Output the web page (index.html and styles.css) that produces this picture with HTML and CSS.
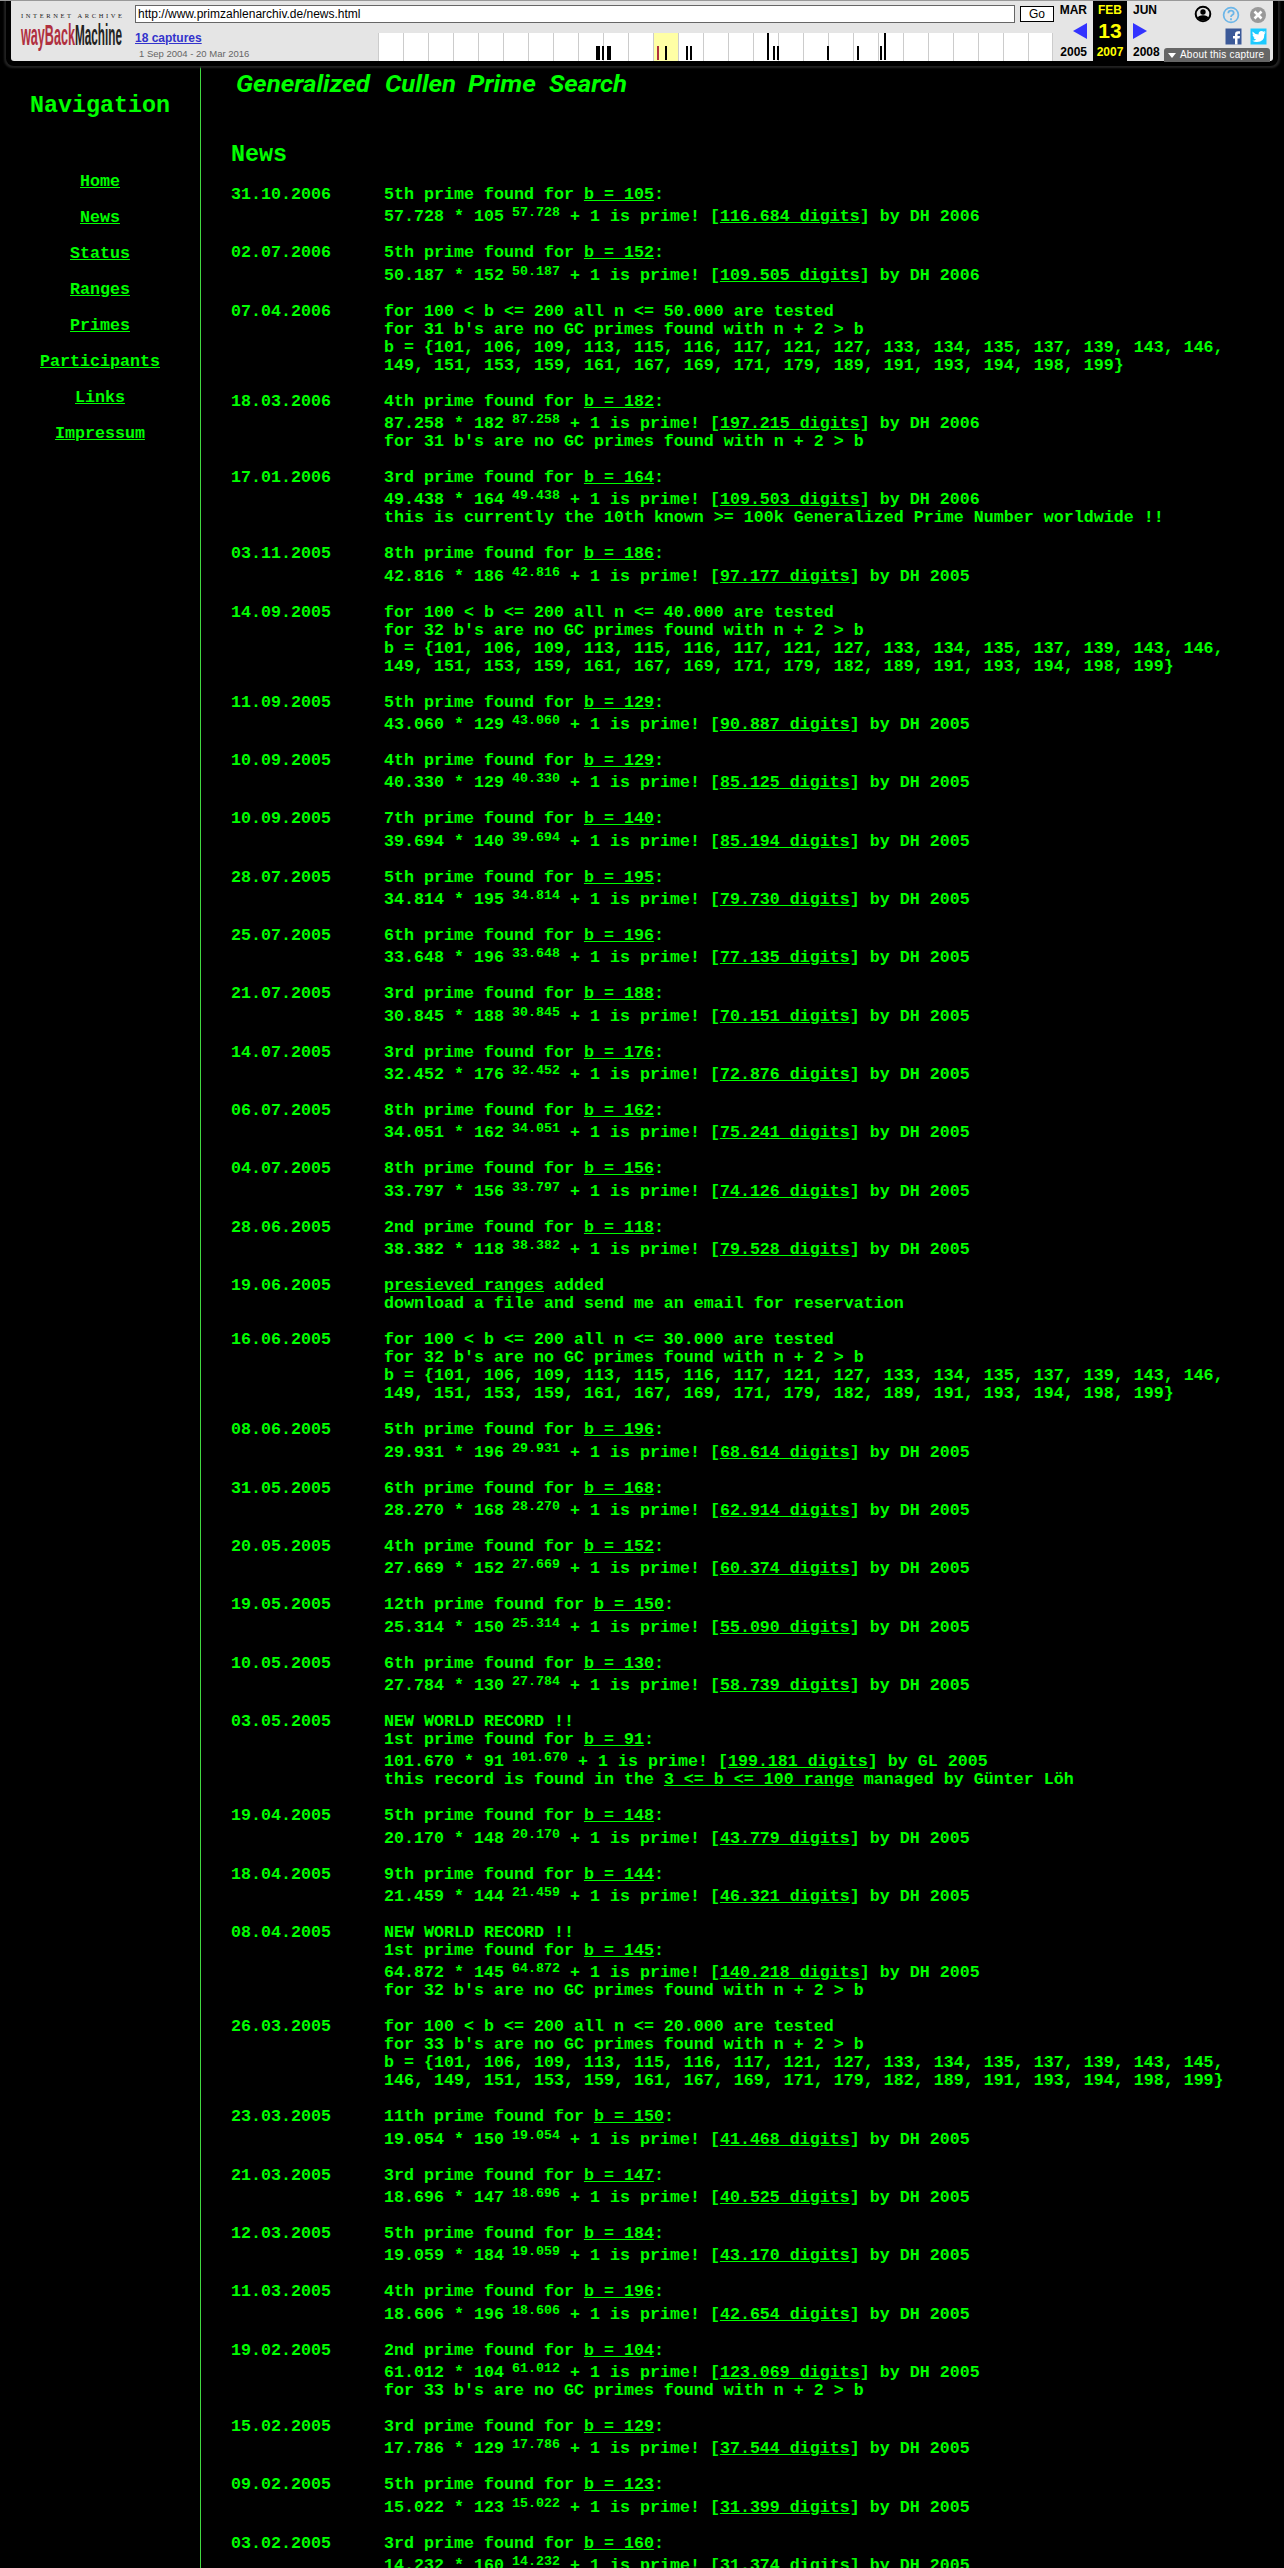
FILE: index.html
```html
<!DOCTYPE html>
<html lang="en">
<head>
    <meta charset="UTF-8">
    <title>Generalized Cullen Prime Search</title>
    <link rel="stylesheet" href="styles.css">
</head>
<body>
    <div class="toolbar">
        <svg class="wb-logo" width="102" height="40" viewBox="0 0 102 40">
            <text class="wb-small" x="0" y="9" textLength="101">INTERNET ARCHIVE</text>
            <g transform="translate(0 36) scale(1 3.2)">
                <text class="wb-big red" x="0" y="0" textLength="54" lengthAdjust="spacingAndGlyphs">wayBack</text>
                <text class="wb-big" x="54" y="0" textLength="47" lengthAdjust="spacingAndGlyphs">Machine</text>
            </g>
        </svg>

        <div class="middle">
            <form class="url-form">
                <input class="url" type="text" value="http://www.primzahlenarchiv.de/news.html">
                <button class="go" type="button">Go</button>
            </form>
            <div class="captures">
                <div class="capture-info">
                    <a href="#">18 captures</a>
                    <div class="range">1 Sep 2004 - 20 Mar 2016</div>
                </div>
                <svg class="sparkline" width="675" height="28" viewBox="0 0 675 28">
                    <rect width="675" height="28" fill="#fff"/>
                    <rect x="275" width="25" height="28" fill="#ffffa5"/>
                    <path d="M.5 0v28M25.5 0v28M50.5 0v28M75.5 0v28M100.5 0v28M125.5 0v28M150.5 0v28M175.5 0v28M200.5 0v28M225.5 0v28M250.5 0v28M275.5 0v28M300.5 0v28M325.5 0v28M350.5 0v28M375.5 0v28M400.5 0v28M425.5 0v28M450.5 0v28M475.5 0v28M500.5 0v28M525.5 0v28M550.5 0v28M575.5 0v28M600.5 0v28M625.5 0v28M650.5 0v28M674.5 0v28" stroke="#ccc"/>
                    <path d="M218 13h4v14h-4zM224 13h2v14h-2zM229 13h4v14h-4zM287 13h2v14h-2zM308 13h2v14h-2zM312 13h2v14h-2zM389 0h2v27h-2zM395 13h2v14h-2zM399 13h2v14h-2zM449 13h2v14h-2zM479 13h2v14h-2zM502 13h2v14h-2zM506 0h2v27h-2z"/>
                    <path d="M279 13h2v14h-2z" fill="#b0303f"/>
                </svg>
            </div>
        </div>

        <div class="month prev"><span>MAR</span><i class="arrow left"></i><span>2005</span></div>
        <div class="month current"><span>FEB</span><strong>13</strong><span>2007</span></div>
        <div class="month next"><span>JUN</span><i class="arrow right"></i><span>2008</span></div>

        <svg class="icons" width="73" height="40" viewBox="0 0 73 40">
            <circle cx="9" cy="9" r="7.3" fill="none" stroke="#000" stroke-width="2"/>
            <circle cx="9" cy="7" r="2.7"/>
            <path d="M3.5 13q1-2.800 5.500-2.800t5.500 2.800q-2 2.500-5.500 2.500t-5.500-2.500z"/>
            <circle cx="37" cy="10" r="7.400" fill="none" stroke="#6cb6e8" stroke-width="1.700"/>
            <path d="M34.300 8.200q.2-2.500 2.700-2.500t2.700 2.200q0 1.300-1.500 2.200-1.200.8-1.200 1.900M37 13.300v2" fill="none" stroke="#6cb6e8" stroke-width="1.800"/>
            <circle cx="64" cy="10" r="8" fill="#999"/>
            <path d="M60.500 6.500l7 7M67.500 6.500l-7 7" stroke="#fff" stroke-width="2.600"/>
            <path d="M31.500 23.500h16v16h-16z" fill="#3b5998"/>
            <path d="M41 39.500v-6h-2v-2.400h2v-1.800q0-3 3-3h2v2.400h-1.500q-1 0-1 1v1.400h2.500l-.4 2.400h-2.100v6z" fill="#fff"/>
            <path d="M56.500 23.500h16v16h-16z" fill="#1dcaff"/>
            <path d="M58.500 26.500q2.500 3 6 3 0-3.500 3-3.500 1.300 0 2 .8l2-.7-1.200 1.700 1.500-.4-1.400 1.500q0 8-7.500 8.200-2.500 0-4.600-1.300 2.400 0 3.900-1.200-2-.1-2.700-2.100h1.200q-2.200-.8-2.300-3l1.200.4q-1.700-1.300-1.100-3.400z" fill="#fff"/>
        </svg>
        <div class="about"><i></i>About this capture</div>
    </div>

    <div class="page">
        <div class="sidebar">
            <h2>Navigation</h2>
            <a href="#">Home</a>
            <a href="#">News</a>
            <a href="#">Status</a>
            <a href="#">Ranges</a>
            <a href="#">Primes</a>
            <a href="#">Participants</a>
            <a href="#">Links</a>
            <a href="#">Impressum</a>
        </div>

        <div class="content">
            <svg class="title" width="400" height="26" viewBox="0 0 400 26">
                <text x="5" y="19" textLength="134" lengthAdjust="spacingAndGlyphs">Generalized</text>
                <text x="154" y="19" textLength="71" lengthAdjust="spacingAndGlyphs">Cullen</text>
                <text x="237" y="19" textLength="68" lengthAdjust="spacingAndGlyphs">Prime</text>
                <text x="318" y="19" textLength="78" lengthAdjust="spacingAndGlyphs">Search</text>
            </svg>
            <h2>News</h2>
            <div id="news"></div>
        </div>
    </div>

    <script src="news.js"></script>
</body>
</html>
```

FILE: styles.css
```css
* {
    box-sizing: border-box;
}

html {
    height: 2568px;
    overflow: hidden;
    background: #000;
}

body {
    margin: 0;
    height: 2568px;
    overflow: hidden;
    background: #000;
    color: #00ff00;
    border-top: 1px solid #999;
    font-family: "Liberation Mono", monospace;
    font-size: 12.5pt;
    font-weight: bold;
    line-height: 18px;
}

a {
    color: inherit;
}

/* archive toolbar */
.toolbar {
    position: relative;
    display: flex;
    width: 1262px;
    height: 60px;
    margin: 0 auto;
    background: #e5e5e5;
    color: #000;
    border-radius: 0 0 3px 3px;
    box-shadow: 0 0 0 5px #000, 0 0 2px 7px #222;
    font-family: "Liberation Sans", Arial, sans-serif;
    font-size: 12px;
    font-weight: normal;
}

.wb-logo {
    margin: 8px 0 0 10px;
    overflow: visible;
}

.wb-small {
    font: 6.5px "Liberation Serif", serif;
    fill: #222;
}

.wb-big {
    font: bold 9px "Liberation Sans", sans-serif;
    fill: #222;
}

.wb-big.red {
    fill: #b0303f;
}

.middle {
    width: 919px;
    margin-left: 12px;
}

.url-form {
    display: flex;
    gap: 5px;
    margin-top: 4px;
}

.url {
    width: 880px;
    height: 18px;
    padding: 0 2px;
    border: 1px solid #666;
    background: #fff;
    font: 12px "Liberation Sans", sans-serif;
}

.go {
    width: 34px;
    height: 16px;
    margin-top: 1px;
    padding: 0;
    border: 1px solid #000;
    background: #fff;
    font: 12px "Liberation Sans", sans-serif;
}

.captures {
    display: flex;
    margin-top: 10px;
}

.capture-info {
    width: 243px;
    line-height: 14px;
}

.capture-info a {
    display: block;
    margin-top: -2px;
    color: #33c;
    font-weight: bold;
}

.range {
    margin: 3px 0 0 4px;
    color: #666;
    font-size: 9.5px;
    line-height: 12px;
}

.month {
    display: flex;
    flex-direction: column;
    justify-content: space-between;
    height: 60px;
    padding: 0 6px;
    font-weight: bold;
    line-height: 18px;
}

.prev {
    width: 39px;
    align-items: flex-end;
}

.current {
    width: 34px;
    align-items: center;
    padding: 0;
    background: #000;
    color: #ff0;
}

.current strong {
    font-size: 21px;
}

.next {
    width: 45px;
    align-items: flex-start;
}

.arrow {
    border: 8px solid transparent;
}

.left {
    border-left: 0;
    border-right: 14px solid #33f;
}

.right {
    border-right: 0;
    border-left: 14px solid #33f;
}

.icons {
    position: absolute;
    top: 4px;
    right: 6px;
}

.about {
    position: absolute;
    right: 3px;
    bottom: -1px;
    display: flex;
    align-items: center;
    width: 106px;
    height: 14px;
    padding-left: 4px;
    border-radius: 3px 3px 0 0;
    background: #666;
    color: #fff;
    font-size: 10px;
    letter-spacing: 0.2px;
    white-space: nowrap;
}

.about i {
    margin-right: 4px;
    border: 4px solid transparent;
    border-top: 5px solid #fff;
    border-bottom: 0;
}

/* page */
.page {
    display: flex;
    height: 2502px;
    margin-top: 5px;
}

h2 {
    margin: 0;
    font-size: 17.5pt;
    line-height: 26px;
}

.sidebar {
    display: flex;
    flex-direction: column;
    align-items: center;
    gap: 18px;
    width: 201px;
    padding-top: 27px;
    border-right: 1px solid #40d840;
}

.sidebar h2 {
    margin-bottom: 36px;
}

.content {
    padding-left: 30px;
}

.title {
    display: block;
    margin: 7px 0 43px;
    overflow: visible;
}

.title text {
    font: italic bold 23px Roboto, sans-serif;
    fill: #00ff00;
}

.entry {
    display: grid;
    grid-template-columns: 153px 1fr;
    padding-bottom: 18px;
    white-space: nowrap;
}

#news {
    margin-top: 18px;
}

.formula {
    padding-top: 4.35px;
}

sup {
    font-size: 10pt;
    line-height: 0;
    vertical-align: 5.5px;
}
```

FILE: news.js
```js
// [date, ...lines]; a line is plain html, or an array [k, b, digits, who] for a found prime
function found(nth, date, k, b, digits, year, finder) {
    return [date, nth + ' prime found for <a href="#">b = ' + b + '</a>:', [k, b, digits, (finder || 'DH') + ' ' + year]];
}

function tested(date, n, count, first, second) {
    return [
        date,
        'for 100 &lt; b &lt;= 200 all n &lt;= ' + n + ' are tested',
        left(count),
        'b = {101, 106, 109, 113, 115, 116, 117, 121, 127, 133, 134, 135, 137, 139, 143, ' + first,
        second + '}'
    ];
}

function left(count) {
    return 'for ' + count + " b's are no GC primes found with n + 2 &gt; b";
}

const record = 'NEW WORLD RECORD !!';
const list182 = '149, 151, 153, 159, 161, 167, 169, 171, 179, 182, 189, 191, 193, 194, 198, 199';

const news = [
    found('5th', '31.10.2006', '57.728', 105, '116.684', 2006),
    found('5th', '02.07.2006', '50.187', 152, '109.505', 2006),
    tested('07.04.2006', '50.000', 31, '146,', '149, 151, 153, 159, 161, 167, 169, 171, 179, 189, 191, 193, 194, 198, 199'),
    found('4th', '18.03.2006', '87.258', 182, '197.215', 2006).concat(left(31)),
    found('3rd', '17.01.2006', '49.438', 164, '109.503', 2006).concat('this is currently the 10th known &gt;= 100k Generalized Prime Number worldwide !!'),
    found('8th', '03.11.2005', '42.816', 186, '97.177', 2005),
    tested('14.09.2005', '40.000', 32, '146,', list182),
    found('5th', '11.09.2005', '43.060', 129, '90.887', 2005),
    found('4th', '10.09.2005', '40.330', 129, '85.125', 2005),
    found('7th', '10.09.2005', '39.694', 140, '85.194', 2005),
    found('5th', '28.07.2005', '34.814', 195, '79.730', 2005),
    found('6th', '25.07.2005', '33.648', 196, '77.135', 2005),
    found('3rd', '21.07.2005', '30.845', 188, '70.151', 2005),
    found('3rd', '14.07.2005', '32.452', 176, '72.876', 2005),
    found('8th', '06.07.2005', '34.051', 162, '75.241', 2005),
    found('8th', '04.07.2005', '33.797', 156, '74.126', 2005),
    found('2nd', '28.06.2005', '38.382', 118, '79.528', 2005),
    ['19.06.2005', '<a href="#">presieved ranges</a> added', 'download a file and send me an email for reservation'],
    tested('16.06.2005', '30.000', 32, '146,', list182),
    found('5th', '08.06.2005', '29.931', 196, '68.614', 2005),
    found('6th', '31.05.2005', '28.270', 168, '62.914', 2005),
    found('4th', '20.05.2005', '27.669', 152, '60.374', 2005),
    found('12th', '19.05.2005', '25.314', 150, '55.090', 2005),
    found('6th', '10.05.2005', '27.784', 130, '58.739', 2005),
    ['03.05.2005', record].concat(
        found('1st', '', '101.670', 91, '199.181', 2005, 'GL').slice(1),
        ['this record is found in the <a href="#">3 &lt;= b &lt;= 100 range</a> managed by Günter Löh']
    ),
    found('5th', '19.04.2005', '20.170', 148, '43.779', 2005),
    found('9th', '18.04.2005', '21.459', 144, '46.321', 2005),
    ['08.04.2005', record].concat(found('1st', '', '64.872', 145, '140.218', 2005).slice(1), [left(32)]),
    tested('26.03.2005', '20.000', 33, '145,', '146, ' + list182),
    found('11th', '23.03.2005', '19.054', 150, '41.468', 2005),
    found('3rd', '21.03.2005', '18.696', 147, '40.525', 2005),
    found('5th', '12.03.2005', '19.059', 184, '43.170', 2005),
    found('4th', '11.03.2005', '18.606', 196, '42.654', 2005),
    found('2nd', '19.02.2005', '61.012', 104, '123.069', 2005).concat(left(33)),
    found('3rd', '15.02.2005', '17.786', 129, '37.544', 2005),
    found('5th', '09.02.2005', '15.022', 123, '31.399', 2005),
    found('3rd', '03.02.2005', '14.232', 160, '31.374', 2005)
];

function renderLine(line) {
    if (typeof line === 'string') {
        return '<div>' + line + '</div>';
    }
    const [k, b, digits, who] = line;
    return '<div class="formula">' + k + ' * ' + b + '<sup> ' + k + '</sup> + 1 is prime! [<a href="#">' +
        digits + ' digits</a>] by ' + who + '</div>';
}

document.getElementById('news').innerHTML = news.map(([date, ...lines]) =>
    '<div class="entry"><div>' + date + '</div><div>' + lines.map(renderLine).join('') + '</div></div>'
).join('');
```
